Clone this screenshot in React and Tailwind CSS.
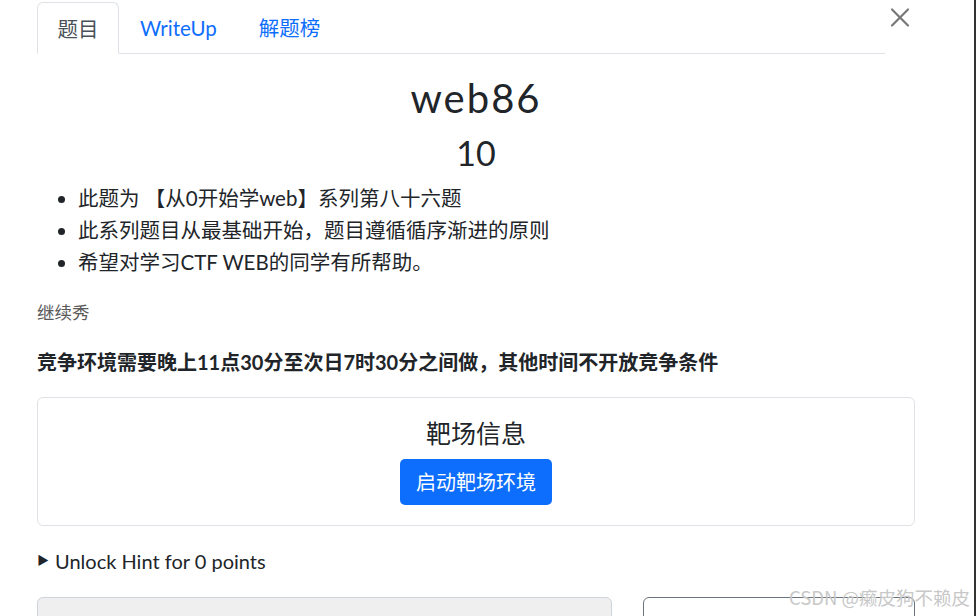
import { X } from "lucide-react";

const font = { fontFamily: 'Lato, "Noto Sans CJK SC", sans-serif' };

const bullets = [
  "此题为 【从0开始学web】系列第八十六题",
  "此系列题目从最基础开始，题目遵循循序渐进的原则",
  "希望对学习CTF WEB的同学有所帮助。",
];

export default function App() {
  return (
    <div
      className="relative h-[616px] w-[976px] overflow-hidden bg-white text-[#212529] border-r-2 border-[#333]"
      style={font}
    >
      <div className="flex">
        <div className="ml-[37px] w-[848px]">
          {/* Tabs */}
          <div className="mt-[2px] flex border-b border-[#dee2e6] text-[20.5px]">
            <div className="-mb-px flex h-[52px] w-[82px] items-center justify-center rounded-t-md border border-b-white border-[#dee2e6] bg-white pt-[2px] text-[#495057]">
              题目
            </div>
            <div className="flex h-[51px] items-center px-[21px] pt-[2px] text-[#0d6efd]">WriteUp</div>
            <div className="flex h-[51px] items-center px-[21px] pt-[2px] text-[#0d6efd]">解题榜</div>
          </div>
        </div>
        <button className="-ml-[1px] mt-[1px] flex h-[32px] w-[32px] items-center justify-center text-[#777]">
          <X size={33} strokeWidth={1.6} />
        </button>
      </div>

      <div className="ml-[37px] w-[878px]">
        <h3 className="mt-[20px] text-center text-[40px] font-normal leading-[48px] tracking-[2px]">
          web86
        </h3>
        <h4 className="mt-[11px] text-center text-[34px] leading-[40px]">10</h4>

        <ul className="mt-[9px] list-disc pl-[41px] text-[20.5px] leading-[32px]">
          {bullets.map((b) => (
            <li key={b}>{b}</li>
          ))}
        </ul>

        <p className="mt-[21px] text-[17.5px] leading-[28px] text-[#5a5a5a]">继续秀</p>

        <p className="mt-[21px] text-[20px] font-bold leading-[28px]">
          竞争环境需要晚上11点30分至次日7时30分之间做，其他时间不开放竞争条件
        </p>

        <div className="mt-[21px] flex h-[129px] flex-col items-center rounded-md border border-[#dee2e6]">
          <div className="mt-[17px] text-[25px] leading-[36px]">靶场信息</div>
          <button className="mt-[8px] h-[46px] w-[152px] rounded-[5px] bg-[#0d6efd] text-[20px] text-white">
            启动靶场环境
          </button>
        </div>

        <div className="mt-[20px] flex items-center gap-[6px] text-[20px] leading-[30px]">
          <span className="text-[12px]">▶</span>
          <span>Unlock Hint for 0 points</span>
        </div>

        <div className="mt-[21px] flex gap-[31px]">
          <div className="h-[40px] w-[575px] rounded-md border border-[#ced4da] bg-[#efefef]"></div>
          <div className="h-[40px] w-[272px] rounded-md border border-[#6c757d] bg-white"></div>
        </div>
      </div>

      <div
        className="absolute right-[4px] top-[584px] text-[18.5px] text-[#c8c8c8]"
        style={{ fontFamily: '"Noto Sans CJK SC", sans-serif' }}
      >
        CSDN @癞皮狗不赖皮
      </div>
    </div>
  );
}
